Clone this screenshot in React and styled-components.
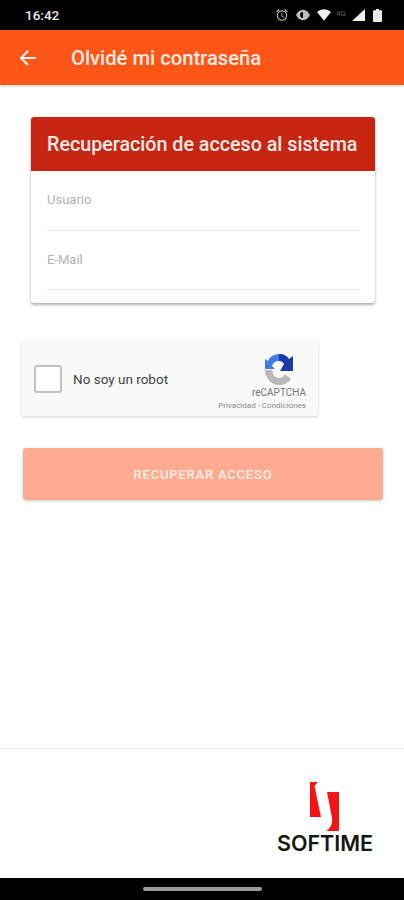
import React from 'react'
import styled, { createGlobalStyle } from 'styled-components'

const Global = createGlobalStyle`
  html, body { margin: 0; padding: 0; background: #fff; }
  * { box-sizing: border-box; }
  body { font-family: Roboto, "Liberation Sans", sans-serif; }
`

const Page = styled.div`
  width: 404px;
  height: 900px;
  display: flex;
  flex-direction: column;
  overflow: hidden;
  background: #fff;
`
const StatusBar = styled.div`
  height: 30px;
  flex: none;
  background: #000;
  display: flex;
  align-items: center;
  justify-content: space-between;
  padding: 0 22px 0 25px;
  color: #e6e6e6;
  font-size: 13.5px;
  font-weight: 500;
`
const StatusIcons = styled.div`
  display: flex;
  align-items: center;
`
const StatusIcon = styled.svg`
  display: block;
  margin-left: ${p => p.$gap || 0}px;
`
const FourG = styled.span`
  width: 12px;
  margin: 0 0 4px 5px;
  font-size: 8px;
  color: #555;
`
const AppBar = styled.div`
  height: 55px;
  flex: none;
  background: #ff5516;
  display: flex;
  align-items: center;
  padding: 0 0 0 19px;
  gap: 34px;
  box-shadow: 0 1px 3px rgba(0, 0, 0, 0.2);
  position: relative;
`
const AppTitle = styled.h1`
  margin: 0;
  font-size: 20.2px;
  font-weight: 500;
  color: #fdece5;
`
const Main = styled.main`
  flex: 1;
  display: flex;
  flex-direction: column;
  align-items: flex-start;
  padding: 32px 21px 0 22px;
`
const Card = styled.section`
  width: 344px;
  margin-left: 9px;
  height: 186px;
  border-radius: 3px;
  background: #fff;
  box-shadow: 0 2px 3px rgba(0, 0, 0, 0.3), 0 0 2px rgba(0, 0, 0, 0.08);
`
const CardHeader = styled.div`
  height: 54px;
  background: #c62512;
  border-radius: 3px 3px 0 0;
  display: flex;
  align-items: center;
  padding-left: 16px;
  color: #fbeae6;
  font-size: 19.7px;
  font-weight: 500;
  white-space: nowrap;
`
const Fields = styled.div`
  padding: 0 16px;
`
const Field = styled.div`
  height: 59.5px;
  padding-top: 21px;
  border-bottom: 1px solid #e9e9e9;
  font-size: 13px;
  line-height: 15px;
  color: #b4b4b4;
`
const Captcha = styled.div`
  width: 296px;
  height: 75px;
  margin-top: 38px;
  padding: 0 12px;
  display: flex;
  align-items: center;
  background: #f9f9f9;
  border-radius: 2px;
  box-shadow: 0 1px 3px rgba(0, 0, 0, 0.18);
`
const Check = styled.div`
  width: 28px;
  height: 28px;
  flex: none;
  background: #fff;
  border: 2px solid #c1c1c1;
  border-radius: 3px;
`
const CaptchaLabel = styled.span`
  margin-left: 11px;
  font-size: 13.5px;
  color: #444;
`
const Brand = styled.div`
  margin-left: auto;
  display: flex;
  flex-direction: column;
  align-items: flex-end;
  padding-top: 8px;
  color: #777;
`
const CaptchaLogo = styled.svg`
  display: block;
  margin-right: 13px;
`
const BrandName = styled.span`
  font-size: 10px;
  line-height: 13px;
  margin-top: 1px;
`
const BrandLinks = styled.span`
  font-size: 8px;
  line-height: 12px;
  margin-top: 1px;
  color: #8a8a8a;
  white-space: nowrap;
`
const Recover = styled.button`
  width: 360px;
  height: 52px;
  margin: 32px 0 0 1px;
  border: none;
  border-radius: 3px;
  background: #ffab91;
  color: #fdeee8;
  font-family: inherit;
  font-size: 13px;
  font-weight: 500;
  letter-spacing: 0.8px;
  box-shadow: 0 1px 3px rgba(0, 0, 0, 0.2);
`
const Footer = styled.footer`
  height: 130px;
  flex: none;
  border-top: 1px solid #ececec;
  display: flex;
  justify-content: flex-end;
  padding: 33px 31px 0 0;
`
const Logo = styled.div`
  width: 96px;
  display: flex;
  flex-direction: column;
  align-items: center;
`
const LogoText = styled.span`
  font-family: Inter, "Liberation Sans", sans-serif;
  font-size: 21.5px;
  font-weight: 600;
  line-height: 22px;
  color: #161616;
  margin-top: 1px;
  white-space: nowrap;
`
const NavBar = styled.div`
  height: 22px;
  flex: none;
  background: #000;
  display: flex;
  align-items: center;
  justify-content: center;
`
const Pill = styled.div`
  width: 119px;
  height: 4px;
  border-radius: 2px;
  background: #9c9c9c;
`

const StatusGlyphs = () => (
  <StatusIcons>
    <StatusIcon width="14" height="14" viewBox="0 0 24 24" fill="#bdbdbd">
      <path d="M22 5.700l-4.600-3.900-1.300 1.500 4.600 3.900L22 5.700zM7.900 3.400L6.600 1.900 2 5.700l1.300 1.500 4.600-3.800zM12.500 8H11v6l4.700 2.900.8-1.200-4-2.400V8zM12 4a9 9 0 100 18 9 9 0 000-18zm0 16a7 7 0 110-14 7 7 0 010 14z" />
    </StatusIcon>
    <StatusIcon $gap={7} width="14" height="14" viewBox="0 0 24 24" fill="#bdbdbd">
      <path d="M12 3C6.500 3 2.500 7 0 12c2.500 5 6.500 9 12 9s9.500-4 12-9c-2.500-5-6.500-9-12-9zM12 17V7a5 5 0 000 10z" fillRule="evenodd" />
    </StatusIcon>
    <StatusIcon $gap={7} width="14" height="12" viewBox="0 0 24 20" fill="#f0f0f0">
      <path d="M12 20L0 5c3-3 7.500-5 12-5s9 2 12 5L12 20z" />
    </StatusIcon>
    <FourG>4G</FourG>
    <StatusIcon $gap={4} width="13" height="12" viewBox="0 0 13 12" fill="#f0f0f0">
      <path d="M13 0v12H0z" />
    </StatusIcon>
    <StatusIcon $gap={8} width="9" height="13" viewBox="0 0 9 13" fill="#e8e8e8">
      <path d="M3 0h3v1.200h2a1 1 0 011 1V12a1 1 0 01-1 1H1a1 1 0 01-1-1V2.200a1 1 0 011-1h2z" />
    </StatusIcon>
  </StatusIcons>
)

const BackArrow = () => (
  <svg width="18" height="18" viewBox="0 0 18 18" fill="none" stroke="#fdeee8" strokeWidth="2.200">
    <path d="M17 9H2M9 2L2 9l7 7" />
  </svg>
)

const CaptchaMark = () => (
  <CaptchaLogo width="28" height="32" viewBox="0 0 28 32">
    <path d="M0 17v2c1 7 7 13 14 13 5 0 9-2 12-6l-6-5c-1 2-3 4-6 4-4 0-6-3-7-8z" fill="#b9b9b9" />
    <path d="M14 1C8 1 4 5 3 8L0 6v10h10l-3-3c1-3 3-5 7-5z" fill="#3f7de8" />
    <path d="M14 1c5 0 8 2 10 5l4-3v15H15l4-7c-1-2-3-3-5-3z" fill="#1a3aa8" />
  </CaptchaLogo>
)

const SoftimeMark = () => (
  <svg width="30" height="49" viewBox="0 0 30 49" fill="#f51414">
    <path d="M0 0h8L4.500 4 11 35H0z" />
    <path d="M17 10h12v39H16c4-2 7-7 6-13z" />
  </svg>
)

export default function App() {
  return (
    <Page>
      <Global />
      <StatusBar>
        <span>16:42</span>
        <StatusGlyphs />
      </StatusBar>
      <AppBar>
        <BackArrow />
        <AppTitle>Olvidé mi contraseña</AppTitle>
      </AppBar>
      <Main>
        <Card>
          <CardHeader>Recuperación de acceso al sistema</CardHeader>
          <Fields>
            <Field>Usuario</Field>
            <Field>E-Mail</Field>
          </Fields>
        </Card>
        <Captcha>
          <Check />
          <CaptchaLabel>No soy un robot</CaptchaLabel>
          <Brand>
            <CaptchaMark />
            <BrandName>reCAPTCHA</BrandName>
            <BrandLinks>Privacidad - Condiciones</BrandLinks>
          </Brand>
        </Captcha>
        <Recover>RECUPERAR ACCESO</Recover>
      </Main>
      <Footer>
        <Logo>
          <SoftimeMark />
          <LogoText>SOFTIME</LogoText>
        </Logo>
      </Footer>
      <NavBar>
        <Pill />
      </NavBar>
    </Page>
  )
}
